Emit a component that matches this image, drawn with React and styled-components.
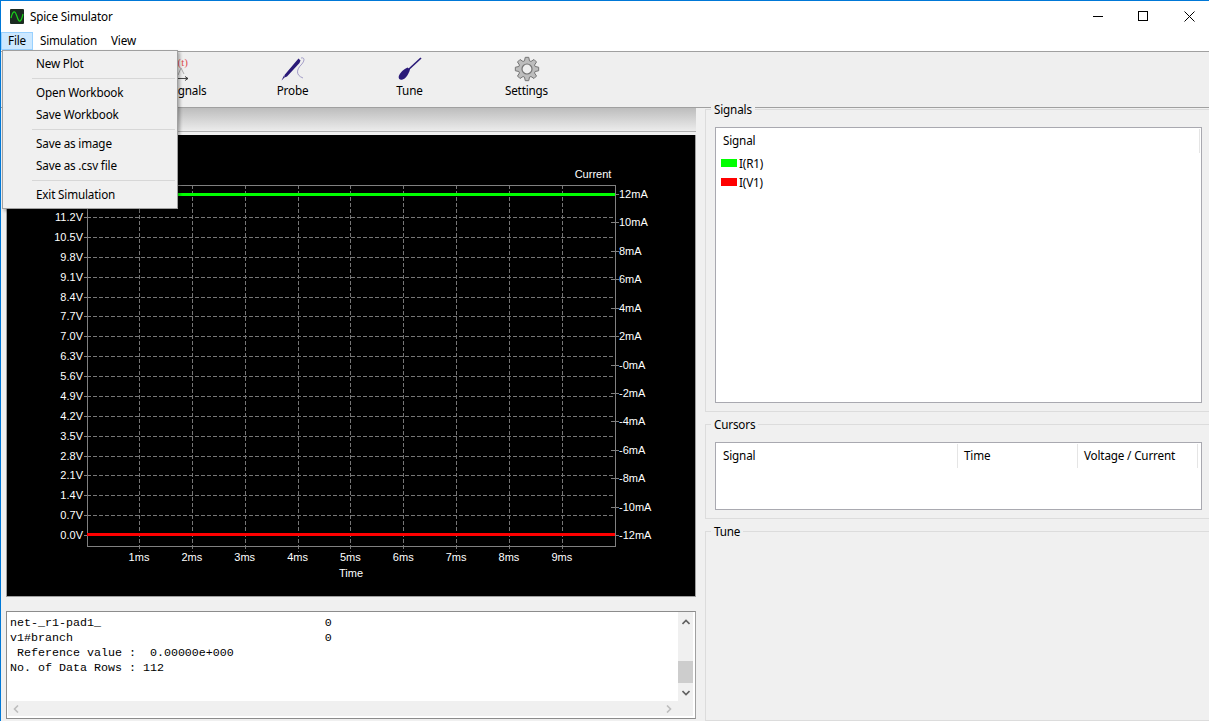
import React from 'react';
import styled, { createGlobalStyle } from 'styled-components';

const UI_FONT = '"Noto Sans", "Open Sans", sans-serif';

const menuGroups = [
  ['New Plot'],
  ['Open Workbook', 'Save Workbook'],
  ['Save as image', 'Save as .csv file'],
  ['Exit Simulation'],
];

const consoleLines = [
  'net-_r1-pad1_                                0',
  'v1#branch                                    0',
  ' Reference value :  0.00000e+000',
  'No. of Data Rows : 112',
];

const voltLabels = Array.from({ length: 17 }, (_, i) => ({
  text: `${(i * 0.7).toFixed(1)}V`,
  y: 535 - i * 19.875,
}));

const ampLabels = Array.from({ length: 13 }, (_, i) => {
  const value = 12 - i * 2;
  return { text: value <= 0 ? `-${Math.abs(value)}mA` : `${value}mA`, y: 194 + i * 28.42 };
});

const timeTicks = Array.from({ length: 9 }, (_, i) => ({
  text: `${i + 1}ms`,
  x: 139 + i * 52.85,
}));

const crisp = (v) => Math.round(v) + 0.5;

const gearPoints = () => {
  const pts = [];
  for (let i = 0; i < 8; i++) {
    const a = (i * Math.PI) / 4 - Math.PI / 2;
    [[-0.3, 8.5], [-0.15, 11.8], [0.15, 11.8], [0.3, 8.5]].forEach(([d, r]) => {
      pts.push(`${(12 + r * Math.cos(a + d)).toFixed(2)},${(12 + r * Math.sin(a + d)).toFixed(2)}`);
    });
  }
  return pts.join(' ');
};

const Chart = () => (
  <ChartSvg viewBox="7 135 688 461">
    {voltLabels.map((l) => (
      <g key={l.text}>
        <GridLine x1="87" x2="615" y1={crisp(l.y)} y2={crisp(l.y)} />
        <AxisLine x1="84" x2="91" y1={crisp(l.y)} y2={crisp(l.y)} />
        <ChartText x="83" y={l.y + 4} textAnchor="end">{l.text}</ChartText>
      </g>
    ))}
    {timeTicks.map((t) => (
      <g key={t.text}>
        <GridLine x1={crisp(t.x)} x2={crisp(t.x)} y1="185" y2="552" />
        <ChartText x={t.x} y="561" textAnchor="middle">{t.text}</ChartText>
      </g>
    ))}
    {ampLabels.map((l, i) => (
      <g key={l.text}>
        <AxisLine x1={i === 0 || i === 12 ? 615 : 611} x2="619" y1={crisp(l.y)} y2={crisp(l.y)} />
        <ChartText x="619" y={l.y + 4}>{l.text}</ChartText>
      </g>
    ))}
    <AxisBox x="87.5" y="185.5" width="528" height="361" />
    <Trace x1="87" x2="615" y1="194.5" y2="194.5" stroke="#00ff00" />
    <Trace x1="87" x2="615" y1="534.5" y2="534.5" stroke="#ff0000" />
    <ChartText x="593" y="178" textAnchor="middle">Current</ChartText>
    <ChartText x="351" y="577" textAnchor="middle">Time</ChartText>
  </ChartSvg>
);

const App = () => (
  <Window>
    <GlobalStyle />
    <TitleBar>
      <AppIcon viewBox="0 0 14 15">
        <rect width="14" height="15" rx="1" fill="#1c2b22" />
        <path d="M1 9C3 1 5 1 7 7.500S11 14 13 5" fill="none" stroke="#19d219" strokeWidth="1.2" />
      </AppIcon>
      <TitleText>Spice Simulator</TitleText>
      <WindowControls>
        <WindowButton>
          <svg width="11" height="11" viewBox="0 0 11 11"><path d="M0 5.500H10" stroke="#000" /></svg>
        </WindowButton>
        <WindowButton>
          <svg width="11" height="11" viewBox="0 0 11 11"><rect x=".5" y=".5" width="9" height="9" fill="none" stroke="#000" /></svg>
        </WindowButton>
        <WindowButton>
          <svg width="11" height="11" viewBox="0 0 11 11"><path d="M.5.500L10.500 10.500M10.500.500L.5 10.500" stroke="#000" /></svg>
        </WindowButton>
      </WindowControls>
    </TitleBar>

    <MenuBar>
      <MenuTitle $active>File</MenuTitle>
      <MenuTitle>Simulation</MenuTitle>
      <MenuTitle>View</MenuTitle>
    </MenuBar>

    <Toolbar>
      <ToolButton>
        <svg width="24" height="24" viewBox="0 0 24 24">
          <ChartIconText x="24" y="8.500" textAnchor="end">I(t)</ChartIconText>
          <path d="M2 17L5 11 8 18 11 11 14 18 17 11 20 17" stroke="#9a9a9a" strokeWidth=".8" fill="none" />
          <path d="M2 21.500H24M21 19.500L24 21.500 21 23.500" stroke="#333" strokeWidth=".9" fill="none" />
        </svg>
        <ToolLabel>Add Signals</ToolLabel>
      </ToolButton>
      <ToolButton>
        <svg width="24" height="24" viewBox="0 0 24 24">
          <path d="M20 1C24 0 24 4 20 8C16 12 14 18 22 21" fill="none" stroke="#8f88bd" strokeWidth=".8" />
          <path d="M17.500 1.500L19.500 3.500 18.500 6 6 19.500 3.500 20.500 3.500 18ZM3.500 20.500L.5 23.500 3 18.500Z" fill="#2a1a78" />
        </svg>
        <ToolLabel>Probe</ToolLabel>
      </ToolButton>
      <ToolButton>
        <svg width="24" height="24" viewBox="0 0 24 24">
          <path d="M23 1L10 13" stroke="#2a1a78" strokeWidth="1.7" />
          <path d="M12 12.500L9.500 10.500C6 12 2 15.500 .8 19C.2 21.500 1.500 23.200 4 22.800C7 22 10.500 18 12 12.500Z" fill="#2a1a78" />
        </svg>
        <ToolLabel>Tune</ToolLabel>
      </ToolButton>
      <ToolButton>
        <svg width="24" height="24" viewBox="0 0 24 24">
          <polygon points={gearPoints()} fill="#bdbdbd" stroke="#757575" />
          <circle cx="12" cy="12" r="5" fill="#efefef" stroke="#757575" strokeWidth="1.2" />
        </svg>
        <ToolLabel>Settings</ToolLabel>
      </ToolButton>
    </Toolbar>

    <Body>
      <LeftColumn>
        <TabStrip />
        <PlotArea>
          <Chart />
        </PlotArea>
        <ConsoleBox>
          <ConsoleMain>
            <ConsoleText>
              {consoleLines.map((line) => (
                <div key={line}>{line}</div>
              ))}
            </ConsoleText>
            <VScroll>
              <ScrollArrow viewBox="0 0 8 6"><path d="M.5 5L4 1.500 7.500 5" /></ScrollArrow>
              <ScrollTrack>
                <ScrollThumb />
              </ScrollTrack>
              <ScrollArrow viewBox="0 0 8 6"><path d="M.5 1L4 4.500 7.500 1" /></ScrollArrow>
            </VScroll>
          </ConsoleMain>
          <HScroll>
            <ScrollArrow $muted viewBox="0 0 6 8"><path d="M5 .5L1.500 4 5 7.500" /></ScrollArrow>
            <ScrollArrow $muted viewBox="0 0 6 8"><path d="M1 .5L4.500 4 1 7.500" /></ScrollArrow>
          </HScroll>
        </ConsoleBox>
      </LeftColumn>

      <RightColumn>
        <GroupBox $height={303}>
          <GroupTitle>Signals</GroupTitle>
          <ListBox>
            <HeaderRow>
              <HeaderCell $width={483}>Signal</HeaderCell>
            </HeaderRow>
            <SignalRow>
              <Swatch $color="#00ff00" />I(R1)
            </SignalRow>
            <SignalRow>
              <Swatch $color="#ff0000" />I(V1)
            </SignalRow>
          </ListBox>
        </GroupBox>
        <GroupBox $height={95}>
          <GroupTitle>Cursors</GroupTitle>
          <ListBox>
            <HeaderRow>
              <HeaderCell $width={241}>Signal</HeaderCell>
              <HeaderCell $width={120}>Time</HeaderCell>
              <HeaderCell $width={120}>Voltage / Current</HeaderCell>
            </HeaderRow>
          </ListBox>
        </GroupBox>
        <GroupBox $grow>
          <GroupTitle>Tune</GroupTitle>
        </GroupBox>
      </RightColumn>
    </Body>

    <FileMenu>
      {menuGroups.map((group, i) => (
        <React.Fragment key={group[0]}>
          {i > 0 && <MenuSeparator />}
          {group.map((item) => (
            <MenuItem key={item}>{item}</MenuItem>
          ))}
        </React.Fragment>
      ))}
    </FileMenu>
  </Window>
);

export default App;

// Estilos

const GlobalStyle = createGlobalStyle`
  html, body {
    margin: 0;
    padding: 0;
    overflow: hidden;
  }
  * {
    box-sizing: border-box;
  }
`;

const Window = styled.div`
  position: relative;
  width: 1209px;
  height: 721px;
  overflow: hidden;
  display: flex;
  flex-direction: column;
  background: #f0f0f0;
  border-top: 1px solid #0078d7;
  border-left: 1px solid #0078d7;
  font-family: ${UI_FONT};
  font-size: 11.7px;
  letter-spacing: -0.17px;
  color: #000;
`;

const TitleBar = styled.div`
  height: 30px;
  flex: none;
  display: flex;
  align-items: center;
  padding-left: 9px;
  background: #fff;
`;

const AppIcon = styled.svg`
  width: 14px;
  height: 15px;
  margin-right: 6px;
`;

const TitleText = styled.span`
  flex: 1;
  line-height: 28px;
`;

const WindowControls = styled.div`
  display: flex;
  margin-right: -3px;
`;

const WindowButton = styled.div`
  width: 45.5px;
  height: 30px;
  display: flex;
  align-items: center;
  justify-content: center;
`;

const MenuBar = styled.div`
  height: 20px;
  flex: none;
  display: flex;
  padding-top: 1px;
  background: #fff;
`;

const MenuTitle = styled.div`
  height: 18px;
  line-height: 14px;
  padding: 0 6px;
  border: 1px solid ${(p) => (p.$active ? '#99d1ff' : 'transparent')};
  background: ${(p) => (p.$active ? '#cce8ff' : 'transparent')};
`;

const Toolbar = styled.div`
  height: 57px;
  flex: none;
  display: flex;
  padding-left: 116px;
  background: #efefef;
  border-top: 1px solid #a0a0a0;
  border-bottom: 1px solid #a0a0a0;
`;

const ToolButton = styled.div`
  width: 117px;
  display: flex;
  flex-direction: column;
  align-items: center;
  padding-top: 5px;
  svg {
    width: 24px;
    height: 24px;
    overflow: visible;
  }
`;

const ChartIconText = styled.text`
  font-family: "Liberation Serif", serif;
  font-size: 11px;
  letter-spacing: 0;
  fill: #e05050;
`;

const ToolLabel = styled.span`
  line-height: 16px;
  margin-top: 1px;
`;

const Body = styled.div`
  flex: 1;
  min-height: 0;
  display: flex;
`;

const LeftColumn = styled.div`
  width: 704px;
  flex: none;
  display: flex;
  flex-direction: column;
  padding: 0 9px 0 5px;
`;

const TabStrip = styled.div`
  height: 24px;
  flex: none;
  margin: 0 0 3px;
  background: linear-gradient(#bdbdbd, #ececec);
  border-bottom: 1px solid #b0b0b0;
`;

const PlotArea = styled.div`
  height: 462px;
  flex: none;
  background: #000;
  border: 1px solid #a0a0a0;
  border-top: none;
`;

const ChartSvg = styled.svg`
  display: block;
  width: 688px;
  height: 461px;
`;

const GridLine = styled.line`
  stroke: #767676;
  stroke-dasharray: 4 2;
`;

const AxisLine = styled.line`
  stroke: #808080;
`;

const AxisBox = styled.rect`
  fill: none;
  stroke: #808080;
`;

const Trace = styled.line`
  stroke-width: 3;
`;

const ChartText = styled.text`
  font-family: "Liberation Sans", Arial, sans-serif;
  font-size: 11px;
  letter-spacing: 0;
  fill: #fff;
`;

const ConsoleBox = styled.div`
  height: 108px;
  flex: none;
  margin-top: 14px;
  display: flex;
  flex-direction: column;
  background: #fff;
  border: 1px solid #8c8c8c;
  border-right-color: #a0a0a0;
`;

const ConsoleMain = styled.div`
  flex: 1;
  min-height: 0;
  display: flex;
  padding-right: 2px;
`;

const ConsoleText = styled.pre`
  flex: 1;
  margin: 0;
  padding: 4px 0 0 3px;
  font-family: "Liberation Mono", "Courier New", monospace;
  font-size: 11.67px;
  line-height: 15px;
  letter-spacing: 0;
  color: #000;
`;

const VScroll = styled.div`
  width: 15px;
  flex: none;
  display: flex;
  flex-direction: column;
  align-items: center;
  background: #f0f0f0;
`;

const ScrollTrack = styled.div`
  flex: 1;
  width: 100%;
  padding-top: 29px;
`;

const ScrollThumb = styled.div`
  height: 22px;
  background: #cdcdcd;
`;

const ScrollArrow = styled.svg`
  flex: none;
  width: ${(p) => (p.$muted ? 6 : 8)}px;
  height: ${(p) => (p.$muted ? 8 : 6)}px;
  margin: ${(p) => (p.$muted ? 0 : 7)}px 0;
  path {
    fill: none;
    stroke: ${(p) => (p.$muted ? '#bdbdbd' : '#606060')};
    stroke-width: 1.6;
  }
`;

const HScroll = styled.div`
  height: 15px;
  flex: none;
  margin: 0 2px 2px 1px;
  display: flex;
  align-items: center;
  justify-content: space-between;
  padding: 0 21px 0 5px;
  background: #f0f0f0;
`;

const RightColumn = styled.div`
  flex: 1;
  min-width: 0;
  display: flex;
  flex-direction: column;
  gap: 12px;
  padding-top: 1px;
`;

const GroupBox = styled.div`
  position: relative;
  flex: ${(p) => (p.$grow ? 1 : 'none')};
  height: ${(p) => (p.$height ? `${p.$height}px` : 'auto')};
  display: flex;
  padding: 17px 7px 8px 9px;
  border: 1px solid #dcdcdc;
  border-right: none;
`;

const GroupTitle = styled.span`
  position: absolute;
  top: -9px;
  left: 5px;
  padding: 0 3px;
  line-height: 16px;
  background: #f0f0f0;
`;

const ListBox = styled.div`
  flex: 1;
  background: #fff;
  border: 1px solid #a9a9b0;
`;

const HeaderRow = styled.div`
  display: flex;
  height: 25px;
  padding: 1px 0 0 1px;
`;

const HeaderCell = styled.div`
  width: ${(p) => p.$width}px;
  padding-left: 6px;
  line-height: 22px;
  height: 24px;
  border-right: 1px solid #e5e5e5;
`;

const SignalRow = styled.div`
  display: flex;
  align-items: center;
  height: 19px;
  padding-left: 5px;
`;

const Swatch = styled.span`
  width: 16px;
  height: 8px;
  margin-right: 2px;
  background: ${(p) => p.$color};
`;

const FileMenu = styled.div`
  position: absolute;
  top: 49px;
  left: 1px;
  width: 176px;
  height: 159px;
  padding: 2px 1px 1px;
  background: #f0f0f0;
  border: 1px solid #a0a0a0;
  box-shadow: 2px 2px 3px rgba(0, 0, 0, 0.3);
`;

const MenuItem = styled.div`
  height: 22px;
  line-height: 20px;
  padding-left: 32px;
`;

const MenuSeparator = styled.div`
  height: 1px;
  margin: 3px 1px 3px 28px;
  background: #d7d7d7;
`;
